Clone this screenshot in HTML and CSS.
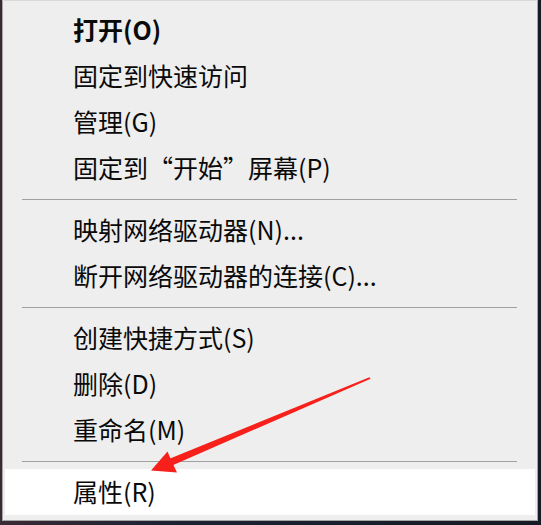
FILE: index.html
```html
<!DOCTYPE html>
<html lang="zh-CN">
<head>
<meta charset="utf-8">
<link rel="stylesheet" href="styles.css">
</head>
<body>
<div class="desk">
  <ul class="menu">
    <li class="item bold">打开(O)</li>
    <li class="item">固定到快速访问</li>
    <li class="item">管理(G)</li>
    <li class="item">固定到“开始”屏幕(P)</li>
    <li class="sep"></li>
    <li class="item">映射网络驱动器(N)...</li>
    <li class="item">断开网络驱动器的连接(C)...</li>
    <li class="sep"></li>
    <li class="item">创建快捷方式(S)</li>
    <li class="item">删除(D)</li>
    <li class="item">重命名(M)</li>
    <li class="sep"></li>
    <li class="item hover">属性(R)</li>
  </ul>
  <svg class="arrow" width="541" height="525" viewBox="0 0 541 525">
    <polygon fill="#f7201a" points="370.6,378.8 369.4,377.2 167.6,459.6 170.4,466.2"/>
    <polygon fill="#f7201a" points="151,470.5 167.5,451.5 172,462 177,472.5"/>
  </svg>
</div>
</body>
</html>
```
FILE: styles.css
```css
html, body {
  margin: 0;
  padding: 0;
}
body {
  width: 541px;
  height: 525px;
  overflow: hidden;
  background: #1a1f2c;
  font-family: "Noto Sans CJK SC", "Noto Sans", sans-serif;
}
.desk {
  position: relative;
  width: 541px;
  height: 525px;
  background: linear-gradient(90deg, #3a2a35 0, #1d2233 30%, #161a24 100%);
}
.menu {
  list-style: none;
  margin: 0 0 0 2px;
  padding: 6px 2px 5px;
  width: 530px;
  background: #eeeeee;
  border: 1px solid #a6a6a6;
  border-top-color: #d9d9d9;
  display: flex;
  flex-direction: column;
}
.item {
  box-sizing: border-box;
  height: 46px;
  display: flex;
  align-items: center;
  padding: 0 0 3px 68px;
  font-size: 25px;
  color: #0a0a0a;
  white-space: nowrap;
}
.bold {
  font-weight: 700;
}
.hover {
  background: #ffffff;
}
.sep {
  height: 1px;
  margin: 8px 18px 7px 17px;
  background: #a0a0a0;
}
.arrow {
  position: absolute;
  left: 0;
  top: 0;
}
```
